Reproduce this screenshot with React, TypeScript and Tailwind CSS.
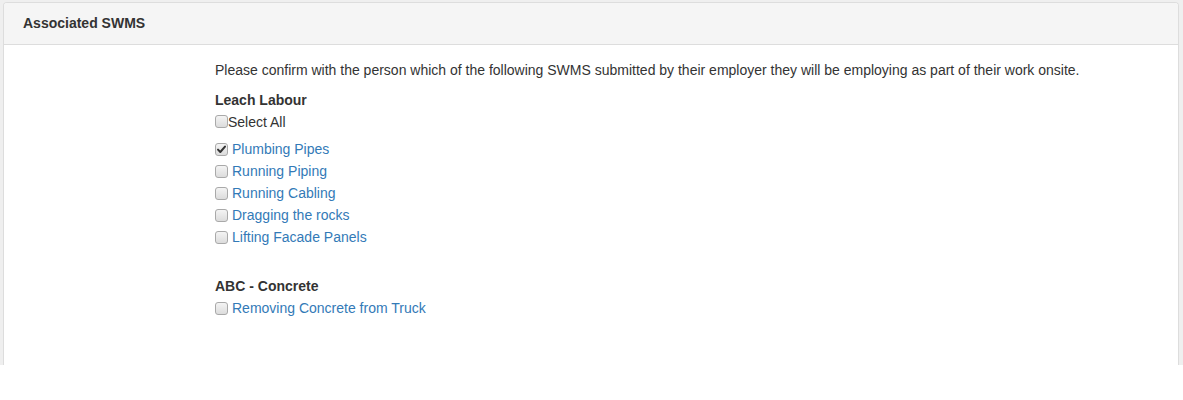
import React from "react";

function Box({ checked = false, className = "" }: { checked?: boolean; className?: string }) {
  return (
    <span className={"relative block w-[13px] h-[13px] shrink-0 rounded-[3px] border border-[#a9a9a9] bg-gradient-to-b from-[#f4f4f4] to-[#dcdcdc] " + className}>
      {checked && (
        <svg viewBox="0 0 13 13" className="absolute left-[-1px] top-[-1px] w-[13px] h-[13px]">
          <path d="M3 6.6 L5.3 9 L10 3.6" fill="none" stroke="#333" strokeWidth="2" strokeLinecap="round" strokeLinejoin="round" />
        </svg>
      )}
    </span>
  );
}

function Item({ label, checked = false }: { label: string; checked?: boolean }) {
  return (
    <div className="flex items-start h-[22px]">
      <Box checked={checked} className="mt-[4px]" />
      <a className="ml-[4px] leading-5 text-[#337ab7] cursor-pointer">{label}</a>
    </div>
  );
}

export default function App() {
  return (
    <div className="bg-white min-h-[400px] text-[14px] text-[#333]" style={{ fontFamily: '"Liberation Sans", Arial, Helvetica, sans-serif' }}>
      <div className="h-[365px] bg-[#efefef] pt-[2px]">
        <div className="ml-[3px] w-[1176px] h-full bg-white border-x border-t border-[#dddddd] rounded-t-[4px] overflow-hidden">
          <div className="h-[42px] bg-[#f5f5f5] border-b border-[#dddddd] pl-[19px] pt-[10px]">
            <h3 className="font-bold leading-5 text-[14px] text-[#333]">Associated SWMS</h3>
          </div>
          <div className="pl-[211px] pt-[15px]">
            <p className="leading-5 mb-[10px]">
              Please confirm with the person which of the following SWMS submitted by their employer they will be employing as part of their work onsite.
            </p>
            <div className="font-bold leading-5">Leach Labour</div>
            <div className="mt-[2px] flex items-start h-5">
              <Box className="mt-[3px]" />
              <span className="leading-5">Select All</span>
            </div>
            <div className="mt-[7px]">
              <Item label="Plumbing Pipes" checked />
              <Item label="Running Piping" />
              <Item label="Running Cabling" />
              <Item label="Dragging the rocks" />
              <Item label="Lifting Facade Panels" />
            </div>
            <div className="mt-[27px] font-bold leading-5">ABC - Concrete</div>
            <div className="mt-[2px]">
              <Item label="Removing Concrete from Truck" />
            </div>
          </div>
        </div>
      </div>
    </div>
  );
}
